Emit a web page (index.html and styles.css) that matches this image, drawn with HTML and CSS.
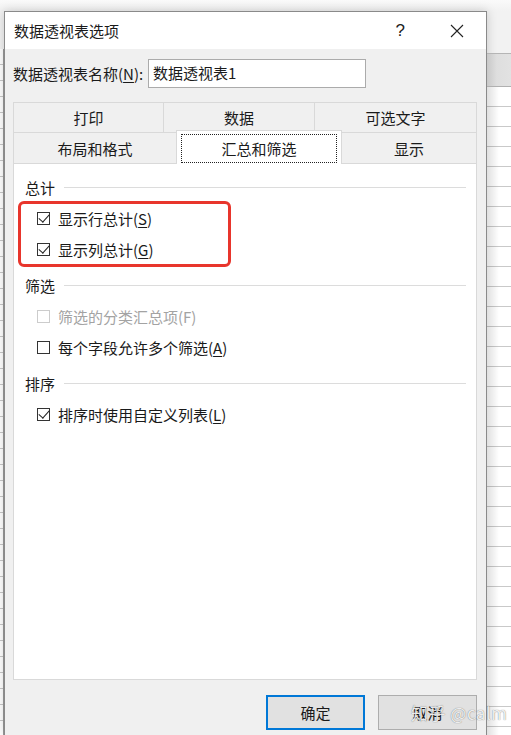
FILE: index.html
```html
<!DOCTYPE html>
<html lang="zh-CN">
<head>
    <meta charset="UTF-8">
    <meta name="viewport" content="width=device-width, initial-scale=1.0">
    <title>数据透视表选项</title>
    <link rel="stylesheet" href="styles.css">
</head>
<body>
<div class="desk">
    <div class="sheet-left"></div>

    <div class="dialog">
        <div class="titlebar">
            <span class="title">数据透视表选项</span>
            <span class="help">?</span>
            <span class="close">
                <svg width="14" height="14" viewBox="0 0 14 14">
                    <path d="M1 1 L13 13 M13 1 L1 13" stroke="#222" stroke-width="1.1" fill="none"/>
                </svg>
            </span>
        </div>

        <div class="body">
            <div class="name-row">
                <label class="name-label">数据透视表名称(<u>N</u>):</label>
                <div class="name-input">数据透视表1</div>
            </div>

            <div class="tabs">
                <div class="tab-row">
                    <div class="tab w1">打印</div>
                    <div class="tab w2">数据</div>
                    <div class="tab w3">可选文字</div>
                </div>
                <div class="tab-row">
                    <div class="tab w4">布局和格式</div>
                    <div class="tab w5 active"><span class="focus">汇总和筛选</span></div>
                    <div class="tab w6">显示</div>
                </div>
            </div>

            <div class="panel">
                <div class="group">
                    <div class="group-head"><span>总计</span><i></i></div>
                    <div class="check">
                        <span class="box on"></span>显示行总计(<u>S</u>)
                    </div>
                    <div class="check">
                        <span class="box on"></span>显示列总计(<u>G</u>)
                    </div>
                </div>

                <div class="group">
                    <div class="group-head"><span>筛选</span><i></i></div>
                    <div class="check disabled">
                        <span class="box"></span>筛选的分类汇总项(F)
                    </div>
                    <div class="check">
                        <span class="box"></span>每个字段允许多个筛选(<u>A</u>)
                    </div>
                </div>

                <div class="group">
                    <div class="group-head"><span>排序</span><i></i></div>
                    <div class="check">
                        <span class="box on"></span>排序时使用自定义列表(<u>L</u>)
                    </div>
                </div>

                <div class="highlight"></div>
            </div>

            <div class="buttons">
                <div class="btn primary">确定</div>
                <div class="btn">取消</div>
            </div>
        </div>
    </div>

    <div class="sheet-right">
        <div class="sheet-head"></div>
        <div class="sheet-rows"></div>
    </div>

    <div class="watermark">知乎 @calm</div>
</div>
</body>
</html>
```

FILE: styles.css
```css
* {
    margin: 0;
    padding: 0;
    box-sizing: border-box;
}

body {
    font-family: "Noto Sans CJK SC", "Microsoft YaHei", sans-serif;
    font-size: 15px;
    color: #1a1a1a;
    background: #f6f6f6;
    width: 511px;
    height: 735px;
    overflow: hidden;
}

u {
    text-decoration: underline;
    text-underline-offset: 2px;
}

.desk {
    position: relative;
    display: flex;
    height: 735px;
    background: linear-gradient(#fafafa, #f2f2f2 11px, #f2f2f2);
}

/* spreadsheet peeking out behind the dialog */
.sheet-left {
    width: 4px;
    margin-top: 49px;
    background:
        repeating-linear-gradient(#fff 0 15px, #c8c8c8 15px 16px);
    border-right: 1px solid #9a9a9a;
}

.sheet-right {
    width: 24px;
    display: flex;
    flex-direction: column;
    margin-top: 53px;
}

.sheet-head {
    height: 34px;
    background: linear-gradient(90deg, #c8c8c8, #dedede 40%, #e2e2e2);
    border-top: 1px solid #b5b5b5;
    border-bottom: 1px solid #b0b0b0;
}

.sheet-rows {
    flex: 1;
    background:
        linear-gradient(90deg, rgba(0,0,0,0.12), rgba(0,0,0,0) 12px),
        repeating-linear-gradient(#fff 0 19px, #c9c9c9 19px 20px);
}

.dialog {
    width: 483px;
    margin-top: 11px;
    border: 1px solid #8a8a8a;
    border-bottom: none;
    background: #f0f0f0;
    box-shadow: 0 0 10px rgba(0,0,0,0.18);
    display: flex;
    flex-direction: column;
}

.titlebar {
    height: 37px;
    background: #fff;
    display: flex;
    align-items: center;
    padding-left: 9px;
}

.title {
    flex: 1;
    font-size: 15px;
}

.help {
    font-family: "Liberation Sans", sans-serif;
    font-size: 17px;
    color: #222;
    margin-right: 45px;
}

.close {
    display: flex;
    margin-right: 22px;
}

.body {
    padding: 0 9px 0 8px;
    flex: 1;
}

.name-row {
    display: flex;
    align-items: center;
    margin-top: 10px;
    height: 29px;
}

.name-label {
    width: 135px;
}

.name-input {
    width: 218px;
    height: 29px;
    background: #fff;
    border: 1px solid #ababab;
    padding: 0 4px;
    line-height: 26px;
}

.tabs {
    margin-top: 14px;
    width: 464px;
}

.tab-row {
    display: flex;
    height: 30px;
}

.tab-row + .tab-row {
    height: 31px;
}

.tab {
    display: flex;
    align-items: center;
    justify-content: center;
    border: 1px solid #d9d9d9;
    border-right: none;
    border-bottom: none;
    background: #f0f0f0;
}

.tab:last-child {
    border-right: 1px solid #d9d9d9;
}

.w1 { width: 150px; }
.w2 { width: 151px; }
.w3 { width: 163px; }
.w4 { width: 163px; }
.w5 { width: 166px; }
.w6 { width: 135px; }

.tab.active {
    background: #fff;
    margin-top: -2px;
    height: 34px;
    padding: 3px 4px 1px;
    border-right: 1px solid #d9d9d9;
    position: relative;
    z-index: 1;
}

.tab.active + .tab {
    border-left: none;
}

.focus {
    flex: 1;
    align-self: stretch;
    display: flex;
    align-items: center;
    justify-content: center;
    border: 1px dotted #222;
}

.panel {
    position: relative;
    width: 464px;
    height: 517px;
    background: #fff;
    border: 1px solid #d9d9d9;
    padding: 13px 10px 0 11px;
}

.group + .group {
    margin-top: 10px;
}

.group-head {
    display: flex;
    align-items: center;
    height: 20px;
    margin-bottom: 6px;
}

.group-head i {
    flex: 1;
    height: 1px;
    background: #dcdcdc;
    margin-left: 9px;
}

.check {
    display: flex;
    align-items: center;
    height: 31px;
    padding-left: 12px;
}

.check .box {
    width: 13px;
    height: 13px;
    border: 1px solid #333;
    margin-right: 8px;
    position: relative;
}

.check .box.on::after {
    content: "";
    position: absolute;
    left: 3px;
    top: -1px;
    width: 5px;
    height: 9px;
    border-right: 1.3px solid #222;
    border-bottom: 1.3px solid #222;
    transform: rotate(42deg);
}

.check.disabled {
    color: #a3a3a3;
}

.check.disabled .box {
    border-color: #cccccc;
}

.highlight {
    position: absolute;
    left: 4px;
    top: 37px;
    width: 213px;
    height: 66px;
    border: 3px solid #e8352c;
    border-radius: 6px;
}

.buttons {
    display: flex;
    justify-content: flex-end;
    gap: 13px;
    margin-top: 15px;
}

.btn {
    width: 99px;
    height: 35px;
    display: flex;
    align-items: center;
    justify-content: center;
    background: #e1e1e1;
    border: 1px solid #adadad;
}

.btn.primary {
    border: 2px solid #0078d7;
}

.watermark {
    position: absolute;
    left: 411px;
    top: 700px;
    white-space: nowrap;
    font-size: 17px;
    color: rgba(255,255,255,0.9);
    text-shadow: 0 0 1px rgba(0,0,0,0.6);
    letter-spacing: 0.5px;
}
```
